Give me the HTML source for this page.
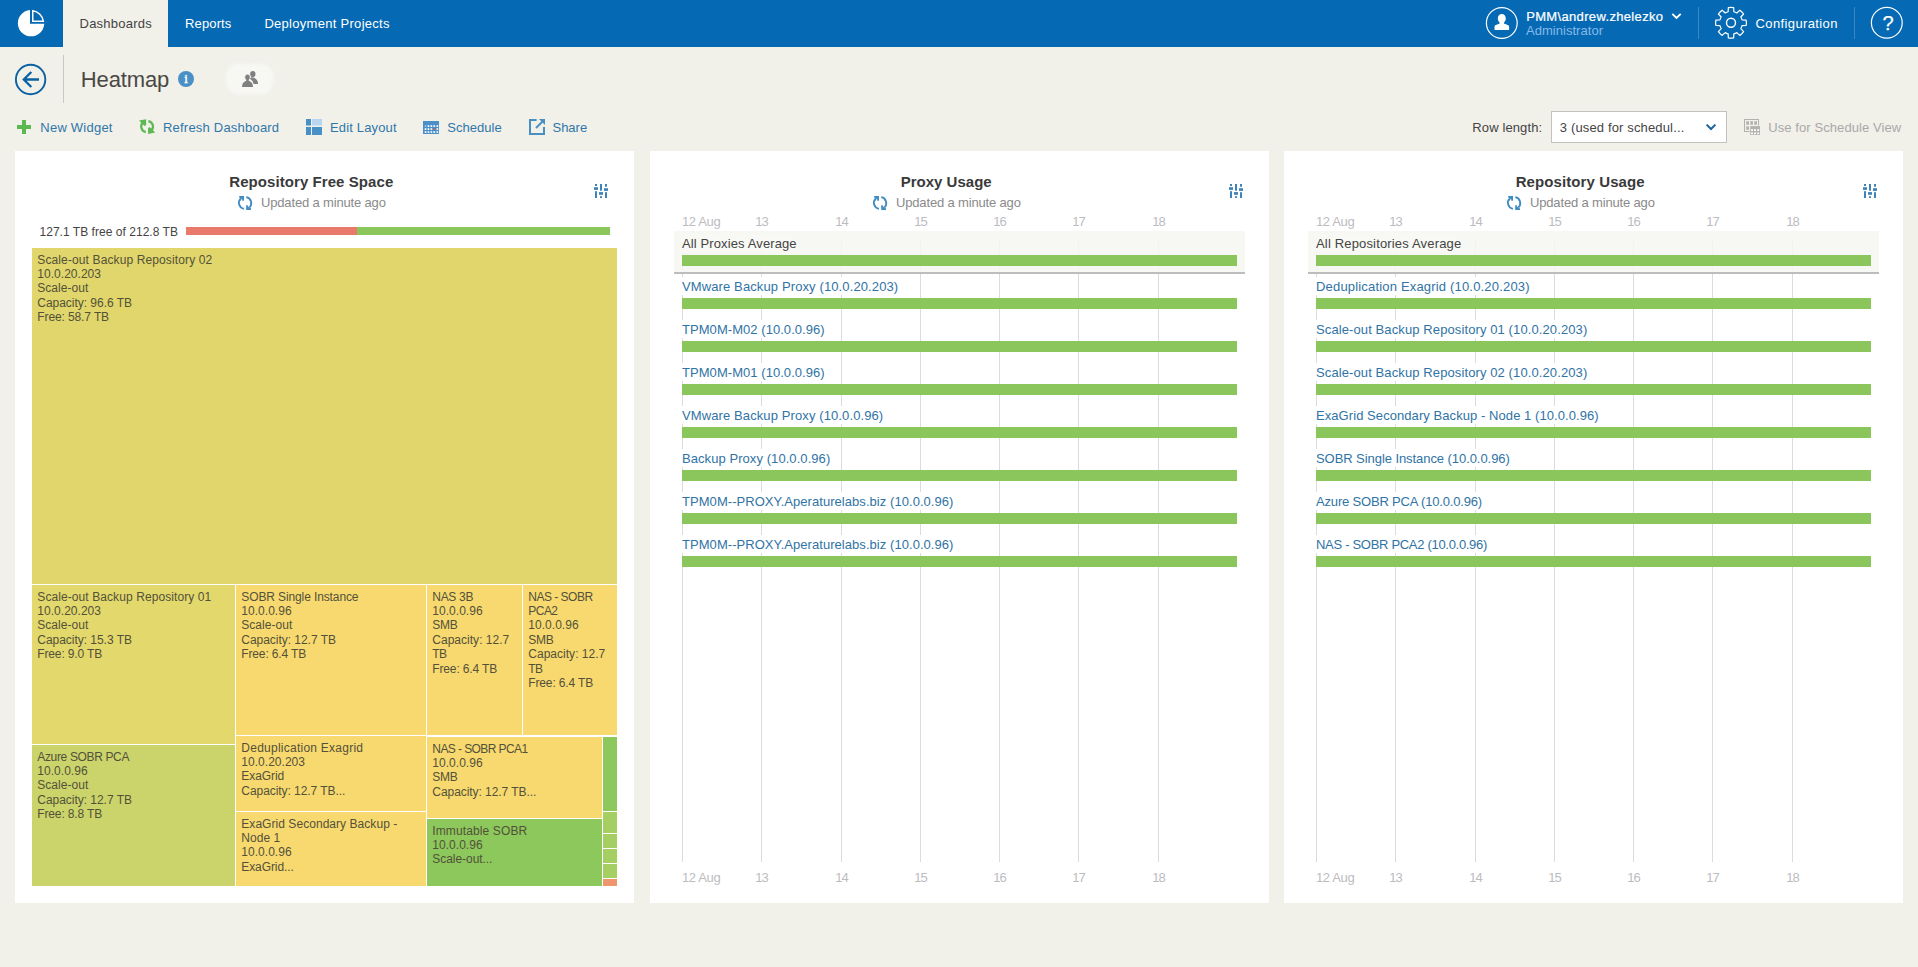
<!DOCTYPE html>
<html lang="en"><head><meta charset="utf-8"><title>Heatmap - Dashboards</title>
<style>
html,body{margin:0;padding:0}
body{width:1918px;height:967px;overflow:hidden;position:relative;background:#f1f0e9;font-family:"Liberation Sans",Arial,sans-serif;}
.t{position:absolute;white-space:nowrap;line-height:20px;height:20px}
.b{position:absolute}
svg{position:absolute;overflow:visible}
.tm{position:absolute;overflow:hidden;box-sizing:border-box}
.tm div{position:absolute;white-space:nowrap;font-size:12px;line-height:20px;height:20px;color:#535139}
</style></head><body>
<div class="b" style="left:0px;top:0px;width:1918px;height:47px;background:#0569b3;"></div>
<div class="b" style="left:63px;top:0px;width:105px;height:47px;background:#f1f0e9;"></div>
<svg style="left:0;top:0" width="63" height="47" viewBox="0 0 63 47"><path d="M30 9.990A13.200 13.200 0 1 0 44.240 23.700L30 23.700Z" fill="#fff"/><path d="M32.750 21.350V10.820A12.450 12.450 0 0 1 43.370 21.350Z" fill="none" stroke="#fff" stroke-width="1.500"/></svg>
<div class="t" style="left:79.50px;top:13.50px;font-size:13px;color:#444;letter-spacing:0.240px;">Dashboards</div>
<div class="t" style="left:185.00px;top:13.50px;font-size:13px;color:#fff;letter-spacing:0.140px;">Reports</div>
<div class="t" style="left:264.40px;top:13.50px;font-size:13px;color:#fff;letter-spacing:0.288px;">Deployment Projects</div>
<svg style="left:1485px;top:6px" width="34" height="34" viewBox="0 0 34 34"><circle cx="16.800" cy="17" r="15.400" fill="none" stroke="#fff" stroke-width="1.200"/><path d="M16.800 8c2.400 0 4 1.900 4 4.400 0 1.700-.7 3.200-1.800 4.100v.9l3.700 1.600c.9.400 1.400 1.100 1.400 2v3H9.500v-3c0-.9.500-1.600 1.400-2l3.700-1.600v-.9c-1.100-.9-1.800-2.400-1.800-4.100 0-2.500 1.600-4.400 4-4.400z" fill="#fff"/></svg>
<div class="t" style="left:1526.20px;top:6.50px;font-size:13px;color:#fff;letter-spacing:0.338px;-webkit-text-stroke:0.22px #fff;">PMM\andrew.zhelezko</div>
<div class="t" style="left:1526.00px;top:20.50px;font-size:13px;color:#86bae8;letter-spacing:0.033px;">Administrator</div>
<svg style="left:1671px;top:12px" width="11" height="8" viewBox="0 0 11 8"><path d="M1.300 1.800L5.500 6l4.200-4.200" fill="none" stroke="#fff" stroke-width="1.900"/></svg>
<div class="b" style="left:1698px;top:7px;width:1px;height:32px;background:#3b86c6;"></div>
<svg style="left:1714px;top:6px" width="34" height="34" viewBox="0 0 34 34"><g fill="none" stroke="#fff" stroke-width="1.200" stroke-linejoin="round"><circle cx="17" cy="16.800" r="4.500" stroke-width="1.400"/><path d="M14.15 5.76L14.33 1.63A15.4 15.4 0 0 1 19.67 1.63L19.85 5.76A11.4 11.4 0 0 1 22.79 6.98L25.83 4.19A15.4 15.4 0 0 1 29.61 7.97L26.82 11.01A11.4 11.4 0 0 1 28.04 13.95L32.17 14.13A15.4 15.4 0 0 1 32.17 19.47L28.04 19.65A11.4 11.4 0 0 1 26.82 22.59L29.61 25.63A15.4 15.4 0 0 1 25.83 29.41L22.79 26.62A11.4 11.4 0 0 1 19.85 27.84L19.67 31.97A15.4 15.4 0 0 1 14.33 31.97L14.15 27.84A11.4 11.4 0 0 1 11.21 26.62L8.17 29.41A15.4 15.4 0 0 1 4.39 25.63L7.18 22.59A11.4 11.4 0 0 1 5.96 19.65L1.83 19.47A15.4 15.4 0 0 1 1.83 14.13L5.96 13.95A11.4 11.4 0 0 1 7.18 11.01L4.39 7.97A15.4 15.4 0 0 1 8.17 4.19L11.21 6.98A11.4 11.4 0 0 1 14.15 5.76Z"/></g></svg>
<div class="t" style="left:1755.50px;top:13.50px;font-size:13px;color:#fff;letter-spacing:0.383px;">Configuration</div>
<div class="b" style="left:1854px;top:7px;width:1px;height:32px;background:#3b86c6;"></div>
<svg style="left:1870px;top:6px" width="34" height="34" viewBox="0 0 34 34"><circle cx="16.800" cy="16.800" r="15.400" fill="none" stroke="#fff" stroke-width="1.200"/></svg>
<div class="t" style="left:1882.44px;top:13.00px;font-size:20px;color:#fff;-webkit-text-stroke:0.25px #fff;">?</div>
<svg style="left:14px;top:63px" width="33" height="33" viewBox="0 0 33 33"><circle cx="16.600" cy="16.500" r="14.700" fill="none" stroke="#0a61a4" stroke-width="1.900"/><path d="M25 16.500H10.500M17.300 9l-7.500 7.500 7.500 7.500" fill="none" stroke="#0a61a4" stroke-width="2.300"/></svg>
<div class="b" style="left:63px;top:55px;width:1px;height:48px;background:#c9c8c2;"></div>
<div class="t" style="left:80.80px;top:69.50px;font-size:22px;color:#4a4845;letter-spacing:-0.138px;">Heatmap</div>
<svg style="left:178px;top:71px" width="16" height="16" viewBox="0 0 16 16"><circle cx="8" cy="8" r="8" fill="#4a90c6"/></svg>
<div class="t" style="left:184.26px;top:69.00px;font-size:13px;color:#fff;font-family:'Liberation Serif',serif;-webkit-text-stroke:0.4px #fff;">i</div>
<svg style="left:220px;top:56px" width="60" height="46" viewBox="0 0 60 46"><defs><filter id="bl" x="-20%" y="-20%" width="140%" height="140%"><feGaussianBlur stdDeviation="1.600"/></filter></defs><rect x="6" y="7.500" width="47.500" height="31" rx="13" ry="13" fill="#f7f7f4" filter="url(#bl)"/><g fill="#808080"><ellipse cx="32.800" cy="18" rx="2.700" ry="3.100"/><path d="M31.200 21.200c3.600 0 6.900 2.300 6.900 6.700h-4.500c-.5-2.600-1.900-4.300-4-5.200z"/><ellipse cx="27.500" cy="21.200" rx="2.700" ry="3" stroke="#f9f9f7" stroke-width="0.600"/><rect x="26.300" y="23" width="2.400" height="3"/><path d="M22 31c0-4 2.300-6.300 5.500-6.300s5.500 2.300 5.500 6.300z"/></g></svg>
<svg style="left:17px;top:120px" width="14" height="14" viewBox="0 0 14 14"><path d="M5 0h4v5h5v4H9v5H5V9H0V5h5z" fill="#5cb851"/></svg>
<div class="t" style="left:40.30px;top:117.50px;font-size:13px;color:#3077a9;letter-spacing:0.232px;">New Widget</div>
<svg style="left:139px;top:119px" width="16.2" height="15.2" viewBox="0 0 16.200 15.200"><g><path d="M6.800 13.100A5.600 5.600 0 0 1 3.500 4" fill="none" stroke="#5cb851" stroke-width="2.2"/><path d="M0 1.600L7.100 0.200V6L5.600 7.100Z" fill="#5cb851"/></g><g transform="rotate(180 8.100 7.600)"><path d="M6.800 13.100A5.600 5.600 0 0 1 3.500 4" fill="none" stroke="#5cb851" stroke-width="2.2"/><path d="M0 1.600L7.100 0.200V6L5.600 7.100Z" fill="#5cb851"/></g></svg>
<div class="t" style="left:163.00px;top:117.50px;font-size:13px;color:#3077a9;letter-spacing:0.210px;">Refresh Dashboard</div>
<svg style="left:306px;top:119px" width="16" height="16" viewBox="0 0 16 16"><rect x="0" y="0" width="5" height="6.500" fill="#4891c8"/><rect x="6" y="0" width="10" height="6.500" fill="#b9d5ef"/><rect x="0" y="8" width="5" height="8" fill="#4891c8"/><rect x="6" y="8" width="10" height="8" fill="#4891c8"/></svg>
<div class="t" style="left:330.00px;top:117.50px;font-size:13px;color:#3077a9;letter-spacing:0.151px;">Edit Layout</div>
<svg style="left:423px;top:121px" width="16" height="13" viewBox="0 0 16 13"><rect width="16" height="13" fill="#4a8fc7"/><rect x="1.7" y="4.2" width="1.700" height="1.700" fill="#9cc4e6"/><rect x="4.6" y="4.2" width="1.700" height="1.700" fill="#fff"/><rect x="7.5" y="4.2" width="1.700" height="1.700" fill="#fff"/><rect x="10.4" y="4.2" width="1.700" height="1.700" fill="#fff"/><rect x="13.5" y="4.2" width="1.700" height="1.700" fill="#fff"/><rect x="1.7" y="7.2" width="1.700" height="1.700" fill="#fff"/><rect x="4.6" y="7.2" width="1.700" height="1.700" fill="#fff"/><rect x="7.5" y="7.2" width="1.700" height="1.700" fill="#fff"/><rect x="10.4" y="7.2" width="1.700" height="1.700" fill="#e2574c"/><rect x="13.5" y="7.2" width="1.700" height="1.700" fill="#fff"/><rect x="1.7" y="10.2" width="1.700" height="1.700" fill="#fff"/><rect x="4.6" y="10.2" width="1.700" height="1.700" fill="#fff"/><rect x="7.5" y="10.2" width="1.700" height="1.700" fill="#fff"/><rect x="10.4" y="10.2" width="1.700" height="1.700" fill="#fff"/><rect x="13.5" y="10.2" width="1.700" height="1.700" fill="#fff"/></svg>
<div class="t" style="left:447.30px;top:117.50px;font-size:13px;color:#3077a9;letter-spacing:0.024px;">Schedule</div>
<svg style="left:529px;top:119px" width="16" height="16" viewBox="0 0 16 16"><path d="M7.600 1H1v14h14V8" fill="none" stroke="#4a8fc0" stroke-width="2"/><path d="M10 0h6v6z" fill="#4a8fc0"/><path d="M13.500 2.500L7 9" fill="none" stroke="#4a8fc0" stroke-width="2"/></svg>
<div class="t" style="left:552.50px;top:117.50px;font-size:13px;color:#3077a9;letter-spacing:-0.018px;">Share</div>
<div class="t" style="left:1472.30px;top:117.50px;font-size:13px;color:#444;letter-spacing:0.123px;">Row length:</div>
<div class="b" style="left:1551px;top:111px;width:176px;height:32px;background:#fff;box-sizing:border-box;border:1px solid #c2c2bd;"></div>
<div class="t" style="left:1559.80px;top:117.50px;font-size:13px;color:#444;letter-spacing:0.146px;">3 (used for schedul...</div>
<svg style="left:1705px;top:123px" width="12" height="8" viewBox="0 0 12 8"><path d="M1.600 1.600L6 6l4.400-4.400" fill="none" stroke="#1b629b" stroke-width="2"/></svg>
<svg style="left:1744px;top:119px" width="16" height="16" viewBox="0 0 16 16"><rect x="0.500" y="0.500" width="14" height="12" fill="none" stroke="#b3b3ae"/><g fill="#b3b3ae"><rect x="2.2" y="2.300" width="2.800" height="3.400"/><rect x="6.2" y="2.300" width="2.800" height="3.400"/><rect x="10.2" y="2.300" width="2.800" height="3.400"/><rect x="2.200" y="7.400" width="2.800" height="3.400"/><rect x="5.700" y="6.600" width="10.300" height="9.400" fill="#f1f0e9"/><rect x="6.200" y="7.100" width="9.800" height="8.800"/></g><g fill="#fff"><rect x="7.1" y="10.2" width="1.900" height="1.800"/><rect x="10.1" y="10.2" width="1.900" height="1.800"/><rect x="13.2" y="10.2" width="1.900" height="1.800"/><rect x="7.1" y="13.4" width="1.900" height="1.800"/><rect x="10.1" y="13.4" width="1.900" height="1.800"/><rect x="13.2" y="13.4" width="1.900" height="1.800"/></g></svg>
<div class="t" style="left:1768.30px;top:117.50px;font-size:13px;color:#a9a9a9;letter-spacing:0.082px;">Use for Schedule View</div>
<div class="b" style="left:15px;top:151px;width:619px;height:752px;background:#fff;"></div>
<div class="b" style="left:650px;top:151px;width:619px;height:752px;background:#fff;"></div>
<div class="b" style="left:1284px;top:151px;width:619px;height:752px;background:#fff;"></div>
<div class="t" style="left:229.30px;top:171.50px;font-size:15px;color:#3a3a3a;letter-spacing:0.069px;font-weight:bold;">Repository Free Space</div>
<svg style="left:594px;top:184px" width="14" height="14" viewBox="0 0 14 14"><g fill="#3f83b8"><rect x="1" y="0" width="2" height="2"/><rect x="0" y="3.200" width="4" height="2.700"/><rect x="1" y="7.200" width="2" height="6.800"/><rect x="6" y="0" width="2" height="6.700"/><rect x="5" y="8.100" width="4" height="2.700"/><rect x="6" y="12.200" width="2" height="1.800"/><rect x="11" y="0" width="2" height="2.700"/><rect x="10" y="4.200" width="4" height="2.700"/><rect x="11" y="8.200" width="2" height="5.800"/></g></svg>
<div class="t" style="left:900.70px;top:171.50px;font-size:15px;color:#3a3a3a;letter-spacing:0.011px;font-weight:bold;">Proxy Usage</div>
<svg style="left:1229px;top:184px" width="14" height="14" viewBox="0 0 14 14"><g fill="#3f83b8"><rect x="1" y="0" width="2" height="2"/><rect x="0" y="3.200" width="4" height="2.700"/><rect x="1" y="7.200" width="2" height="6.800"/><rect x="6" y="0" width="2" height="6.700"/><rect x="5" y="8.100" width="4" height="2.700"/><rect x="6" y="12.200" width="2" height="1.800"/><rect x="11" y="0" width="2" height="2.700"/><rect x="10" y="4.200" width="4" height="2.700"/><rect x="11" y="8.200" width="2" height="5.800"/></g></svg>
<div class="t" style="left:1515.70px;top:171.50px;font-size:15px;color:#3a3a3a;letter-spacing:0.092px;font-weight:bold;">Repository Usage</div>
<svg style="left:1863px;top:184px" width="14" height="14" viewBox="0 0 14 14"><g fill="#3f83b8"><rect x="1" y="0" width="2" height="2"/><rect x="0" y="3.200" width="4" height="2.700"/><rect x="1" y="7.200" width="2" height="6.800"/><rect x="6" y="0" width="2" height="6.700"/><rect x="5" y="8.100" width="4" height="2.700"/><rect x="6" y="12.200" width="2" height="1.800"/><rect x="11" y="0" width="2" height="2.700"/><rect x="10" y="4.200" width="4" height="2.700"/><rect x="11" y="8.200" width="2" height="5.800"/></g></svg>
<svg style="left:237.85000000000002px;top:196.05px" width="14.200" height="14" viewBox="0 0 14.200 14"><g><path d="M5.900 12.850A6 6 0 0 1 2.900 2.500" fill="none" stroke="#418cc3" stroke-width="1.900"/><path d="M1.200 0H6V4.800H4.300V3.600L1.200 1.500Z" fill="#418cc3"/></g><g transform="rotate(180 7.100 7)"><path d="M5.900 12.850A6 6 0 0 1 2.900 2.500" fill="none" stroke="#418cc3" stroke-width="1.900"/><path d="M1.200 0H6V4.800H4.300V3.600L1.200 1.500Z" fill="#418cc3"/></g></svg>
<div class="t" style="left:261.00px;top:192.50px;font-size:13px;color:#8a8a8a;letter-spacing:-0.161px;">Updated a minute ago</div>
<svg style="left:872.8499999999999px;top:196.05px" width="14.200" height="14" viewBox="0 0 14.200 14"><g><path d="M5.900 12.850A6 6 0 0 1 2.900 2.500" fill="none" stroke="#418cc3" stroke-width="1.900"/><path d="M1.200 0H6V4.800H4.300V3.600L1.200 1.500Z" fill="#418cc3"/></g><g transform="rotate(180 7.100 7)"><path d="M5.900 12.850A6 6 0 0 1 2.900 2.500" fill="none" stroke="#418cc3" stroke-width="1.900"/><path d="M1.200 0H6V4.800H4.300V3.600L1.200 1.500Z" fill="#418cc3"/></g></svg>
<div class="t" style="left:896.00px;top:192.50px;font-size:13px;color:#8a8a8a;letter-spacing:-0.161px;">Updated a minute ago</div>
<svg style="left:1506.85px;top:196.05px" width="14.200" height="14" viewBox="0 0 14.200 14"><g><path d="M5.900 12.850A6 6 0 0 1 2.900 2.500" fill="none" stroke="#418cc3" stroke-width="1.900"/><path d="M1.200 0H6V4.800H4.300V3.600L1.200 1.500Z" fill="#418cc3"/></g><g transform="rotate(180 7.100 7)"><path d="M5.900 12.850A6 6 0 0 1 2.900 2.500" fill="none" stroke="#418cc3" stroke-width="1.900"/><path d="M1.200 0H6V4.800H4.300V3.600L1.200 1.500Z" fill="#418cc3"/></g></svg>
<div class="t" style="left:1530.00px;top:192.50px;font-size:13px;color:#8a8a8a;letter-spacing:-0.161px;">Updated a minute ago</div>
<div class="t" style="left:39.50px;top:222.00px;font-size:12px;color:#444;letter-spacing:0.034px;">127.1 TB free of 212.8 TB</div>
<div class="b" style="left:186px;top:227px;width:171px;height:8px;background:#e8796b;"></div>
<div class="b" style="left:357px;top:227px;width:253px;height:8px;background:#8bc65c;"></div>
<div class="tm" style="left:32px;top:248px;width:585px;height:336px;background:#e0d66b"><div style="left:5.300px;top:2.00px;letter-spacing:0.119px;">Scale-out Backup Repository 02</div><div style="left:5.300px;top:16.00px;letter-spacing:0.028px;">10.0.20.203</div><div style="left:5.300px;top:30.00px;letter-spacing:0.034px;">Scale-out</div><div style="left:5.300px;top:45.00px;letter-spacing:-0.028px;">Capacity: 96.6 TB</div><div style="left:5.300px;top:59.00px;letter-spacing:-0.112px;">Free: 58.7 TB</div></div>
<div class="tm" style="left:32px;top:585px;width:203px;height:159px;background:#e3d86c"><div style="left:5.300px;top:2.00px;letter-spacing:0.085px;">Scale-out Backup Repository 01</div><div style="left:5.300px;top:16.00px;letter-spacing:0.028px;">10.0.20.203</div><div style="left:5.300px;top:30.00px;letter-spacing:0.034px;">Scale-out</div><div style="left:5.300px;top:45.00px;letter-spacing:-0.033px;">Capacity: 15.3 TB</div><div style="left:5.300px;top:59.00px;letter-spacing:-0.148px;">Free: 9.0 TB</div></div>
<div class="tm" style="left:32px;top:745px;width:203px;height:141px;background:#cbd46b"><div style="left:5.300px;top:2.00px;letter-spacing:-0.350px;">Azure SOBR PCA</div><div style="left:5.300px;top:16.00px;letter-spacing:0.028px;">10.0.0.96</div><div style="left:5.300px;top:30.00px;letter-spacing:0.034px;">Scale-out</div><div style="left:5.300px;top:45.00px;letter-spacing:-0.033px;">Capacity: 12.7 TB</div><div style="left:5.300px;top:59.00px;letter-spacing:-0.148px;">Free: 8.8 TB</div></div>
<div class="tm" style="left:236px;top:585px;width:190px;height:150px;background:#f8d96f"><div style="left:5.300px;top:2.00px;letter-spacing:-0.115px;">SOBR Single Instance</div><div style="left:5.300px;top:16.00px;letter-spacing:0.028px;">10.0.0.96</div><div style="left:5.300px;top:30.00px;letter-spacing:0.034px;">Scale-out</div><div style="left:5.300px;top:45.00px;letter-spacing:-0.033px;">Capacity: 12.7 TB</div><div style="left:5.300px;top:59.00px;letter-spacing:-0.148px;">Free: 6.4 TB</div></div>
<div class="tm" style="left:427px;top:585px;width:95px;height:150px;background:#f8d96f"><div style="left:5.300px;top:2.00px;letter-spacing:-0.314px;">NAS 3B</div><div style="left:5.300px;top:16.00px;letter-spacing:0.028px;">10.0.0.96</div><div style="left:5.300px;top:30.00px;letter-spacing:-0.335px;">SMB</div><div style="left:5.300px;top:45.00px;letter-spacing:0.020px;">Capacity: 12.7</div><div style="left:5.300px;top:59.00px;letter-spacing:-0.567px;">TB</div><div style="left:5.300px;top:74.00px;letter-spacing:-0.148px;">Free: 6.4 TB</div></div>
<div class="tm" style="left:523px;top:585px;width:94px;height:150px;background:#f8d96f"><div style="left:5.300px;top:2.00px;letter-spacing:-0.505px;">NAS - SOBR</div><div style="left:5.300px;top:16.00px;letter-spacing:-0.537px;">PCA2</div><div style="left:5.300px;top:30.00px;letter-spacing:0.028px;">10.0.0.96</div><div style="left:5.300px;top:45.00px;letter-spacing:-0.335px;">SMB</div><div style="left:5.300px;top:59.00px;letter-spacing:0.020px;">Capacity: 12.7</div><div style="left:5.300px;top:74.00px;letter-spacing:-0.567px;">TB</div><div style="left:5.300px;top:88.00px;letter-spacing:-0.148px;">Free: 6.4 TB</div></div>
<div class="tm" style="left:236px;top:736px;width:190px;height:75px;background:#f8d96f"><div style="left:5.300px;top:2.00px;letter-spacing:0.250px;">Deduplication Exagrid</div><div style="left:5.300px;top:16.00px;letter-spacing:0.028px;">10.0.20.203</div><div style="left:5.300px;top:30.00px;letter-spacing:-0.064px;">ExaGrid</div><div style="left:5.300px;top:45.00px;letter-spacing:-0.059px;">Capacity: 12.7 TB...</div></div>
<div class="tm" style="left:236px;top:812px;width:190px;height:74px;background:#f8d96f"><div style="left:5.300px;top:2.00px;letter-spacing:0.048px;">ExaGrid Secondary Backup -</div><div style="left:5.300px;top:16.00px;letter-spacing:0.050px;">Node 1</div><div style="left:5.300px;top:30.00px;letter-spacing:0.028px;">10.0.0.96</div><div style="left:5.300px;top:45.00px;letter-spacing:-0.095px;">ExaGrid...</div></div>
<div class="tm" style="left:427px;top:737px;width:175px;height:81px;background:#f8d96f"><div style="left:5.300px;top:2.00px;letter-spacing:-0.582px;">NAS - SOBR PCA1</div><div style="left:5.300px;top:16.00px;letter-spacing:0.028px;">10.0.0.96</div><div style="left:5.300px;top:30.00px;letter-spacing:-0.335px;">SMB</div><div style="left:5.300px;top:45.00px;letter-spacing:-0.059px;">Capacity: 12.7 TB...</div></div>
<div class="tm" style="left:427px;top:819px;width:175px;height:67px;background:#8cc85c"><div style="left:5.300px;top:2.00px;letter-spacing:0.117px;">Immutable SOBR</div><div style="left:5.300px;top:16.00px;letter-spacing:0.028px;">10.0.0.96</div><div style="left:5.300px;top:30.00px;letter-spacing:-0.050px;">Scale-out...</div></div>
<div class="tm" style="left:603px;top:737px;width:14px;height:74px;background:#8cc85c"></div>
<div class="tm" style="left:603px;top:812px;width:14px;height:21px;background:#a6cf63"></div>
<div class="tm" style="left:603px;top:834px;width:14px;height:14px;background:#a6cf63"></div>
<div class="tm" style="left:603px;top:849px;width:14px;height:14px;background:#a6cf63"></div>
<div class="tm" style="left:603px;top:864px;width:14px;height:14px;background:#a6cf63"></div>
<div class="tm" style="left:603px;top:879px;width:14px;height:7px;background:#ef976c"></div>
<div class="b" style="left:682px;top:239px;width:1px;height:623px;background:#dcdcdc;"></div>
<div class="b" style="left:761px;top:239px;width:1px;height:623px;background:#dcdcdc;"></div>
<div class="b" style="left:841px;top:239px;width:1px;height:623px;background:#dcdcdc;"></div>
<div class="b" style="left:920px;top:239px;width:1px;height:623px;background:#dcdcdc;"></div>
<div class="b" style="left:999px;top:239px;width:1px;height:623px;background:#dcdcdc;"></div>
<div class="b" style="left:1078px;top:239px;width:1px;height:623px;background:#dcdcdc;"></div>
<div class="b" style="left:1158px;top:239px;width:1px;height:623px;background:#dcdcdc;"></div>
<div class="b" style="left:674px;top:231px;width:571px;height:41px;background:rgba(246,246,241,0.86);"></div>
<div class="b" style="left:674px;top:272px;width:571px;height:2px;background:#bdbdbd;"></div>
<div class="t" style="left:682.00px;top:211.50px;font-size:13px;color:#bcbcbf;letter-spacing:-0.364px;">12 Aug</div>
<div class="t" style="left:755.20px;top:211.50px;font-size:13px;color:#bcbcbf;letter-spacing:-0.830px;">13</div>
<div class="t" style="left:835.20px;top:211.50px;font-size:13px;color:#bcbcbf;letter-spacing:-0.830px;">14</div>
<div class="t" style="left:914.20px;top:211.50px;font-size:13px;color:#bcbcbf;letter-spacing:-0.830px;">15</div>
<div class="t" style="left:993.20px;top:211.50px;font-size:13px;color:#bcbcbf;letter-spacing:-0.830px;">16</div>
<div class="t" style="left:1072.20px;top:211.50px;font-size:13px;color:#bcbcbf;letter-spacing:-0.830px;">17</div>
<div class="t" style="left:1152.20px;top:211.50px;font-size:13px;color:#bcbcbf;letter-spacing:-0.830px;">18</div>
<div class="t" style="left:682.00px;top:867.50px;font-size:13px;color:#bcbcbf;letter-spacing:-0.364px;">12 Aug</div>
<div class="t" style="left:755.20px;top:867.50px;font-size:13px;color:#bcbcbf;letter-spacing:-0.830px;">13</div>
<div class="t" style="left:835.20px;top:867.50px;font-size:13px;color:#bcbcbf;letter-spacing:-0.830px;">14</div>
<div class="t" style="left:914.20px;top:867.50px;font-size:13px;color:#bcbcbf;letter-spacing:-0.830px;">15</div>
<div class="t" style="left:993.20px;top:867.50px;font-size:13px;color:#bcbcbf;letter-spacing:-0.830px;">16</div>
<div class="t" style="left:1072.20px;top:867.50px;font-size:13px;color:#bcbcbf;letter-spacing:-0.830px;">17</div>
<div class="t" style="left:1152.20px;top:867.50px;font-size:13px;color:#bcbcbf;letter-spacing:-0.830px;">18</div>
<div class="b" style="left:682px;top:234px;width:115.7px;height:18px;background:#f8f8f4;"></div>
<div class="t" style="left:682.00px;top:233.50px;font-size:13px;color:#444;letter-spacing:0.117px;">All Proxies Average</div>
<div class="b" style="left:682px;top:255px;width:555px;height:11px;background:#8bc65c;"></div>
<div class="b" style="left:682px;top:277px;width:218.3px;height:18px;background:#fff;"></div>
<div class="t" style="left:682.00px;top:276.50px;font-size:13px;color:#3073a5;letter-spacing:0.117px;">VMware Backup Proxy (10.0.20.203)</div>
<div class="b" style="left:682px;top:298px;width:555px;height:11px;background:#8bc65c;"></div>
<div class="b" style="left:682px;top:320px;width:144.7px;height:18px;background:#fff;"></div>
<div class="t" style="left:682.00px;top:319.50px;font-size:13px;color:#3073a5;letter-spacing:0.052px;">TPM0M-M02 (10.0.0.96)</div>
<div class="b" style="left:682px;top:341px;width:555px;height:11px;background:#8bc65c;"></div>
<div class="b" style="left:682px;top:363px;width:144.7px;height:18px;background:#fff;"></div>
<div class="t" style="left:682.00px;top:362.50px;font-size:13px;color:#3073a5;letter-spacing:0.052px;">TPM0M-M01 (10.0.0.96)</div>
<div class="b" style="left:682px;top:384px;width:555px;height:11px;background:#8bc65c;"></div>
<div class="b" style="left:682px;top:406px;width:203.3px;height:18px;background:#fff;"></div>
<div class="t" style="left:682.00px;top:405.50px;font-size:13px;color:#3073a5;letter-spacing:0.107px;">VMware Backup Proxy (10.0.0.96)</div>
<div class="b" style="left:682px;top:427px;width:555px;height:11px;background:#8bc65c;"></div>
<div class="b" style="left:682px;top:449px;width:150.3px;height:18px;background:#fff;"></div>
<div class="t" style="left:682.00px;top:448.50px;font-size:13px;color:#3073a5;letter-spacing:0.067px;">Backup Proxy (10.0.0.96)</div>
<div class="b" style="left:682px;top:470px;width:555px;height:11px;background:#8bc65c;"></div>
<div class="b" style="left:682px;top:492px;width:273.5px;height:18px;background:#fff;"></div>
<div class="t" style="left:682.00px;top:491.50px;font-size:13px;color:#3073a5;letter-spacing:0.053px;">TPM0M--PROXY.Aperaturelabs.biz (10.0.0.96)</div>
<div class="b" style="left:682px;top:513px;width:555px;height:11px;background:#8bc65c;"></div>
<div class="b" style="left:682px;top:535px;width:273.5px;height:18px;background:#fff;"></div>
<div class="t" style="left:682.00px;top:534.50px;font-size:13px;color:#3073a5;letter-spacing:0.053px;">TPM0M--PROXY.Aperaturelabs.biz (10.0.0.96)</div>
<div class="b" style="left:682px;top:556px;width:555px;height:11px;background:#8bc65c;"></div>
<div class="b" style="left:1316px;top:239px;width:1px;height:623px;background:#dcdcdc;"></div>
<div class="b" style="left:1395px;top:239px;width:1px;height:623px;background:#dcdcdc;"></div>
<div class="b" style="left:1475px;top:239px;width:1px;height:623px;background:#dcdcdc;"></div>
<div class="b" style="left:1554px;top:239px;width:1px;height:623px;background:#dcdcdc;"></div>
<div class="b" style="left:1633px;top:239px;width:1px;height:623px;background:#dcdcdc;"></div>
<div class="b" style="left:1712px;top:239px;width:1px;height:623px;background:#dcdcdc;"></div>
<div class="b" style="left:1792px;top:239px;width:1px;height:623px;background:#dcdcdc;"></div>
<div class="b" style="left:1308px;top:231px;width:571px;height:41px;background:rgba(246,246,241,0.86);"></div>
<div class="b" style="left:1308px;top:272px;width:571px;height:2px;background:#bdbdbd;"></div>
<div class="t" style="left:1316.00px;top:211.50px;font-size:13px;color:#bcbcbf;letter-spacing:-0.364px;">12 Aug</div>
<div class="t" style="left:1389.20px;top:211.50px;font-size:13px;color:#bcbcbf;letter-spacing:-0.830px;">13</div>
<div class="t" style="left:1469.20px;top:211.50px;font-size:13px;color:#bcbcbf;letter-spacing:-0.830px;">14</div>
<div class="t" style="left:1548.20px;top:211.50px;font-size:13px;color:#bcbcbf;letter-spacing:-0.830px;">15</div>
<div class="t" style="left:1627.20px;top:211.50px;font-size:13px;color:#bcbcbf;letter-spacing:-0.830px;">16</div>
<div class="t" style="left:1706.20px;top:211.50px;font-size:13px;color:#bcbcbf;letter-spacing:-0.830px;">17</div>
<div class="t" style="left:1786.20px;top:211.50px;font-size:13px;color:#bcbcbf;letter-spacing:-0.830px;">18</div>
<div class="t" style="left:1316.00px;top:867.50px;font-size:13px;color:#bcbcbf;letter-spacing:-0.364px;">12 Aug</div>
<div class="t" style="left:1389.20px;top:867.50px;font-size:13px;color:#bcbcbf;letter-spacing:-0.830px;">13</div>
<div class="t" style="left:1469.20px;top:867.50px;font-size:13px;color:#bcbcbf;letter-spacing:-0.830px;">14</div>
<div class="t" style="left:1548.20px;top:867.50px;font-size:13px;color:#bcbcbf;letter-spacing:-0.830px;">15</div>
<div class="t" style="left:1627.20px;top:867.50px;font-size:13px;color:#bcbcbf;letter-spacing:-0.830px;">16</div>
<div class="t" style="left:1706.20px;top:867.50px;font-size:13px;color:#bcbcbf;letter-spacing:-0.830px;">17</div>
<div class="t" style="left:1786.20px;top:867.50px;font-size:13px;color:#bcbcbf;letter-spacing:-0.830px;">18</div>
<div class="b" style="left:1316px;top:234px;width:146.3px;height:18px;background:#f8f8f4;"></div>
<div class="t" style="left:1316.00px;top:233.50px;font-size:13px;color:#444;letter-spacing:0.163px;">All Repositories Average</div>
<div class="b" style="left:1316px;top:255px;width:555px;height:11px;background:#8bc65c;"></div>
<div class="b" style="left:1316px;top:277px;width:215.7px;height:18px;background:#fff;"></div>
<div class="t" style="left:1316.00px;top:276.50px;font-size:13px;color:#3073a5;letter-spacing:0.180px;">Deduplication Exagrid (10.0.20.203)</div>
<div class="b" style="left:1316px;top:298px;width:555px;height:11px;background:#8bc65c;"></div>
<div class="b" style="left:1316px;top:320px;width:273.3px;height:18px;background:#fff;"></div>
<div class="t" style="left:1316.00px;top:319.50px;font-size:13px;color:#3073a5;letter-spacing:0.106px;">Scale-out Backup Repository 01 (10.0.20.203)</div>
<div class="b" style="left:1316px;top:341px;width:555px;height:11px;background:#8bc65c;"></div>
<div class="b" style="left:1316px;top:363px;width:273.3px;height:18px;background:#fff;"></div>
<div class="t" style="left:1316.00px;top:362.50px;font-size:13px;color:#3073a5;letter-spacing:0.106px;">Scale-out Backup Repository 02 (10.0.20.203)</div>
<div class="b" style="left:1316px;top:384px;width:555px;height:11px;background:#8bc65c;"></div>
<div class="b" style="left:1316px;top:406px;width:284.7px;height:18px;background:#fff;"></div>
<div class="t" style="left:1316.00px;top:405.50px;font-size:13px;color:#3073a5;letter-spacing:0.068px;">ExaGrid Secondary Backup - Node 1 (10.0.0.96)</div>
<div class="b" style="left:1316px;top:427px;width:555px;height:11px;background:#8bc65c;"></div>
<div class="b" style="left:1316px;top:449px;width:195.7px;height:18px;background:#fff;"></div>
<div class="t" style="left:1316.00px;top:448.50px;font-size:13px;color:#3073a5;letter-spacing:-0.066px;">SOBR Single Instance (10.0.0.96)</div>
<div class="b" style="left:1316px;top:470px;width:555px;height:11px;background:#8bc65c;"></div>
<div class="b" style="left:1316px;top:492px;width:168px;height:18px;background:#fff;"></div>
<div class="t" style="left:1316.00px;top:491.50px;font-size:13px;color:#3073a5;letter-spacing:-0.174px;">Azure SOBR PCA (10.0.0.96)</div>
<div class="b" style="left:1316px;top:513px;width:555px;height:11px;background:#8bc65c;"></div>
<div class="b" style="left:1316px;top:535px;width:173px;height:18px;background:#fff;"></div>
<div class="t" style="left:1316.00px;top:534.50px;font-size:13px;color:#3073a5;letter-spacing:-0.303px;">NAS - SOBR PCA2 (10.0.0.96)</div>
<div class="b" style="left:1316px;top:556px;width:555px;height:11px;background:#8bc65c;"></div>
</body></html>
